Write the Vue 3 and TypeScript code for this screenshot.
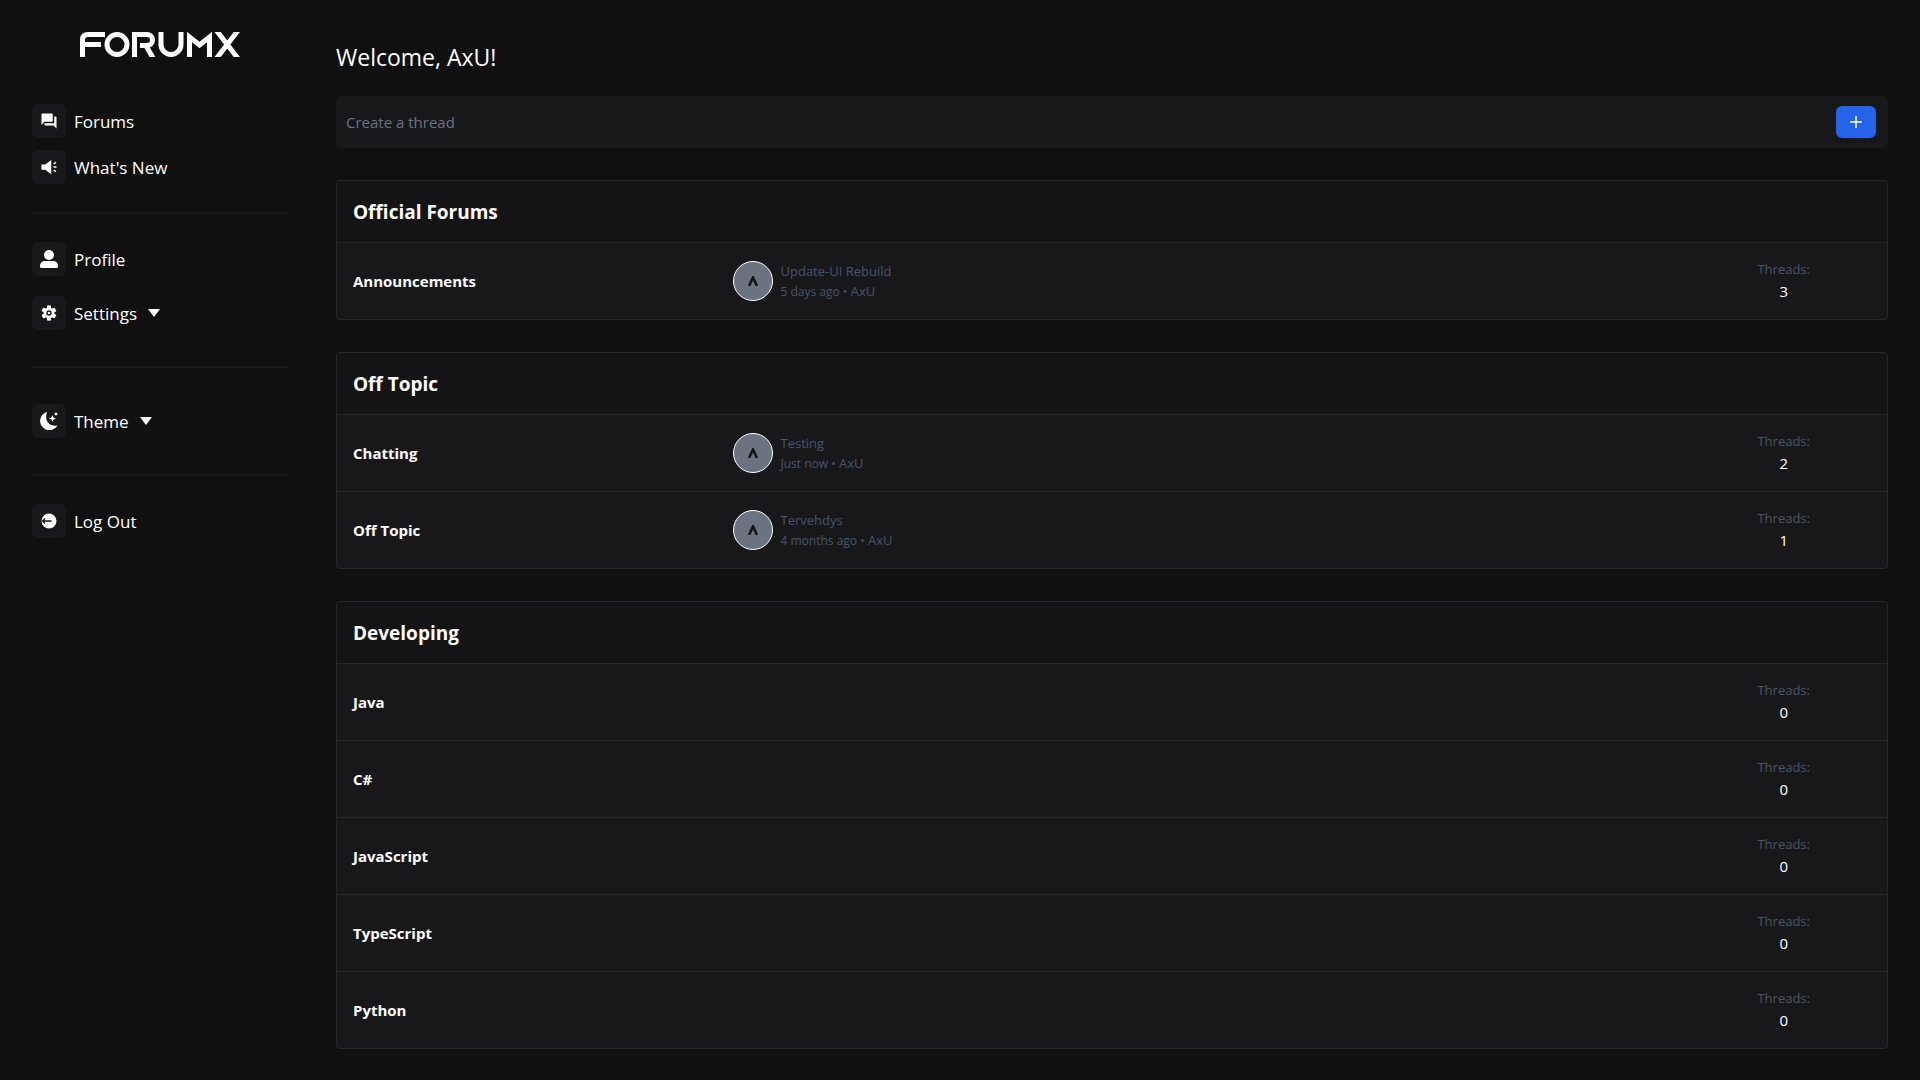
<script setup lang="ts">
import { ref } from 'vue'

interface LatestPost {
  title: string
  age: string
  author: string
}

interface Forum {
  name: string
  threads: number
  latest?: LatestPost
}

interface Category {
  title: string
  forums: Forum[]
}

const user = 'AxU'
const draft = ref('')

const categories: Category[] = [
  {
    title: 'Official Forums',
    forums: [
      { name: 'Announcements', threads: 3, latest: { title: 'Update-UI Rebuild', age: '5 days ago', author: 'AxU' } },
    ],
  },
  {
    title: 'Off Topic',
    forums: [
      { name: 'Chatting', threads: 2, latest: { title: 'Testing', age: 'Just now', author: 'AxU' } },
      { name: 'Off Topic', threads: 1, latest: { title: 'Tervehdys', age: '4 months ago', author: 'AxU' } },
    ],
  },
  {
    title: 'Developing',
    forums: [
      { name: 'Java', threads: 0 },
      { name: 'C#', threads: 0 },
      { name: 'JavaScript', threads: 0 },
      { name: 'TypeScript', threads: 0 },
      { name: 'Python', threads: 0 },
    ],
  },
]
</script>

<template>
  <div class="layout">
    <aside class="sidebar">
      <a class="logo" href="#" aria-label="ForumX">
        <svg viewBox="0 0 160 25" width="160" height="25" fill="none" stroke="currentColor" stroke-width="5">
          <path d="M2.5 25V8q0-5.500 5.500-5.500H25M2.500 12.500H21" />
          <circle cx="37" cy="12.500" r="10" />
          <path d="M54.500 25V2.500H67a5.500 5.500 0 0 1 0 11H60M65 12L73 26" />
          <path d="M81 0v12.500a10 10 0 0 0 20 0V0" />
          <path d="M109.500 25V5L119.500 13L129.500 5V25" />
          <path d="M136.500 -1.500L158 26.500M158 -1.500L136.500 26.500" />
        </svg>
      </a>

      <nav class="menu">
        <div class="group tight">
          <a class="item" href="#">
            <span class="tile">
              <svg viewBox="0 0 24 24" width="18" height="18" fill="currentColor">
                <path d="M21 6h-2v9H6v2c0 .55.45 1 1 1h11l4 4V7c0-.55-.45-1-1-1zm-4 6V3c0-.55-.45-1-1-1H3c-.55 0-1 .45-1 1v14l4-4h10c.55 0 1-.45 1-1z" />
              </svg>
            </span>
            Forums
          </a>
          <a class="item" href="#">
            <span class="tile">
              <svg viewBox="0 0 24 24" width="18" height="18" fill="currentColor">
                <path d="M2 8.500h5l8-6v19l-8-6H2z" />
                <path d="M18 11h4v2h-4zM17.600 7.200l3-2.300 1.200 1.600-3 2.300zM17.600 16.800l1.200-1.600 3 2.300-1.200 1.600z" />
              </svg>
            </span>
            What's New
          </a>
        </div>

        <div class="group loose">
          <a class="item" href="#">
            <span class="tile">
              <svg viewBox="0 0 18 18" width="18" height="18" fill="currentColor">
                <circle cx="9" cy="5" r="5" />
                <path d="M0 16.500C0 12.500 2 11 5 11h8c3 0 5 1.500 5 5.500Q18 18 16.500 18h-15Q0 18 0 16.500z" />
              </svg>
            </span>
            Profile
          </a>
          <button class="item" type="button">
            <span class="tile">
              <svg viewBox="0 0 24 24" width="18" height="18" fill="currentColor">
                <path d="M19.140 12.940c.04-.3.06-.61.06-.94 0-.32-.02-.64-.07-.94l2.030-1.580a.49.490 0 0 0 .12-.61l-1.920-3.320a.49.490 0 0 0-.59-.22l-2.390.96a7 7 0 0 0-1.620-.94l-.36-2.540a.48.480 0 0 0-.48-.41h-3.840a.47.470 0 0 0-.47.410l-.36 2.540c-.59.240-1.130.570-1.620.940l-2.390-.96a.48.480 0 0 0-.59.220L2.740 8.870a.47.470 0 0 0 .12.610l2.030 1.580a6 6 0 0 0-.02 1.880l-2.030 1.580a.49.490 0 0 0-.12.610l1.920 3.320c.12.220.37.290.59.220l2.390-.96c.5.380 1.030.7 1.620.940l.36 2.540c.05.240.24.410.48.410h3.840c.24 0 .44-.17.470-.41l.36-2.540a6.600 6.600 0 0 0 1.620-.94l2.390.96c.22.080.47 0 .59-.22l1.920-3.320a.47.470 0 0 0-.12-.61zM12 15.600a3.600 3.600 0 1 1 0-7.200 3.600 3.600 0 0 1 0 7.200z" />
                <path d="M12 2v20M3.300 7l17.400 10M3.300 17l17.400-10" fill="none" stroke="currentColor" stroke-width="5" stroke-dasharray="4.500 11 4.500" />
                <circle cx="12" cy="12" r="1.800" />
              </svg>
            </span>
            Settings
            <svg class="caret" viewBox="0 0 12 8" width="12" height="8" fill="currentColor"><path d="M0 0h12L6 8z" /></svg>
          </button>
        </div>

        <div class="group single">
          <button class="item" type="button">
            <span class="tile">
              <svg viewBox="0 0 18 18" width="18" height="18" fill="currentColor">
                <path d="M7.200 0A9.200 9.200 0 1 0 17.500 13.200C13 15 7.500 12 6.500 7.500Q5.600 3 7.200 0z" />
                <path d="M12.500 3l1 2.500 2.500 1-2.500 1-1 2.500-1-2.500-2.500-1 2.500-1zM16 0l.7 1.300 1.300.7-1.300.7L16 4l-.7-1.300L14 2l1.300-.7z" />
              </svg>
            </span>
            Theme
            <svg class="caret" viewBox="0 0 12 8" width="12" height="8" fill="currentColor"><path d="M0 0h12L6 8z" /></svg>
          </button>
        </div>

        <div class="group">
          <button class="item" type="button">
            <span class="tile">
              <svg viewBox="0 0 18 18" width="18" height="18">
                <circle cx="9" cy="9" r="7.500" fill="currentColor" />
                <path d="M11.500 9H2.500M5 6.500L2.500 9L5 11.500" fill="none" stroke="#18181b" stroke-width="1.300" />
              </svg>
            </span>
            Log Out
          </button>
        </div>
      </nav>
    </aside>

    <main class="content">
      <h1>Welcome, {{ user }}!</h1>

      <form class="composer" @submit.prevent>
        <input v-model="draft" type="text" placeholder="Create a thread" aria-label="Create a thread" />
        <button type="submit" aria-label="Create">
          <svg viewBox="0 0 12 12" width="12" height="12" stroke="currentColor" stroke-width="1.500"><path d="M6 0v12M0 6h12" /></svg>
        </button>
      </form>

      <section v-for="category in categories" :key="category.title" class="card">
        <h2>{{ category.title }}</h2>
        <ul>
          <li v-for="forum in category.forums" :key="forum.name">
            <a class="name" href="#">{{ forum.name }}</a>
            <div class="latest">
              <template v-if="forum.latest">
                <span class="avatar">
                  <svg viewBox="0 0 10 10" width="10" height="10" fill="none" stroke="currentColor" stroke-width="2.500"><path d="M1 10L5 1.500L9 10" /></svg>
                </span>
                <div class="post">
                  <a href="#">{{ forum.latest.title }}</a>
                  <p><small>{{ forum.latest.age }} •</small> {{ forum.latest.author }}</p>
                </div>
              </template>
            </div>
            <div class="threads">
              <span>Threads:</span>
              <strong>{{ forum.threads }}</strong>
            </div>
          </li>
        </ul>
      </section>
    </main>
  </div>
</template>

<style>
body {
  margin: 0;
  background: #101010;
}
</style>

<style scoped>
* {
  box-sizing: border-box;
}

.layout {
  display: flex;
  min-height: 100vh;
  color: #fff;
  font-family: "Segoe UI", "Open Sans", "Noto Sans", sans-serif;
  font-size: 15px;
  line-height: 24px;
}

a {
  color: inherit;
  text-decoration: none;
}

button {
  padding: 0;
  border: 0;
  background: none;
  color: inherit;
  font: inherit;
  cursor: pointer;
}

svg {
  display: block;
  flex: none;
}

.sidebar {
  flex: none;
  width: 320px;
  padding: 32px;
}

.logo {
  display: flex;
  justify-content: center;
  margin-bottom: 47px;
}

.group {
  display: flex;
  flex-direction: column;
  align-items: flex-start;
}

.group + .group {
  margin-top: 28px;
  padding-top: 28px;
  border-top: 2px solid #18181b;
}

.tight {
  gap: 12px;
}

.loose {
  gap: 20px;
}

.group + .single {
  margin-top: 36px;
  padding-top: 36px;
}

.single + .group {
  margin-top: 36px;
}

.item {
  display: flex;
  align-items: center;
  gap: 8px;
  font-size: 17px;
  line-height: 25px;
}

.tile {
  display: flex;
  align-items: center;
  justify-content: center;
  width: 34px;
  height: 34px;
  border-radius: 6px;
  background: #18181b;
}

.caret {
  margin-left: 3px;
}

.content {
  flex: 1;
  min-width: 0;
  padding: 39px 32px 31px 16px;
}

h1 {
  margin: 0 0 21px;
  font-size: 23px;
  font-weight: 400;
  line-height: 36px;
}

.composer {
  display: flex;
  align-items: center;
  height: 52px;
  padding: 0 12px 0 10px;
  border-radius: 6px;
  background: #18181b;
}

.composer input {
  flex: 1;
  min-width: 0;
  padding: 0;
  border: 0;
  outline: 0;
  background: none;
  color: #fff;
  font: inherit;
}

.composer input::placeholder {
  color: #6b7280;
  opacity: 1;
}

.composer button {
  display: flex;
  align-items: center;
  justify-content: center;
  width: 40px;
  height: 32px;
  border-radius: 6px;
  background: #2563eb;
}

.card {
  margin-top: 32px;
  overflow: hidden;
  border: 1px solid #27272a;
  border-radius: 4px;
  background: #18181b;
}

h2 {
  margin: 0;
  padding: 17px 16px 15px;
  background: #141416;
  font-size: 19px;
  font-weight: 700;
  line-height: 29px;
}

ul {
  margin: 0;
  padding: 0;
  list-style: none;
}

li {
  display: flex;
  align-items: center;
  height: 77px;
  padding: 0 16px;
  border-top: 1px solid #27272a;
}

.name {
  flex: none;
  width: 25%;
  font-weight: 700;
}

.latest {
  display: flex;
  flex: 1;
  align-items: center;
  gap: 8px;
  min-width: 0;
}

.avatar {
  display: flex;
  align-items: center;
  justify-content: center;
  width: 40px;
  height: 40px;
  border: 1px solid #fff;
  border-radius: 50%;
  background: #6b7280;
  color: #111;
}

.post {
  color: #475569;
  font-size: 13px;
  line-height: 20px;
}

.post p {
  margin: 0;
}

.post small {
  font-size: 12px;
}

.threads {
  display: flex;
  flex: none;
  flex-direction: column;
  align-items: center;
  width: 11.5%;
}

.threads span {
  color: #4b5563;
  font-size: 13px;
  line-height: 20px;
}

.threads strong {
  font-weight: 400;
}
</style>
